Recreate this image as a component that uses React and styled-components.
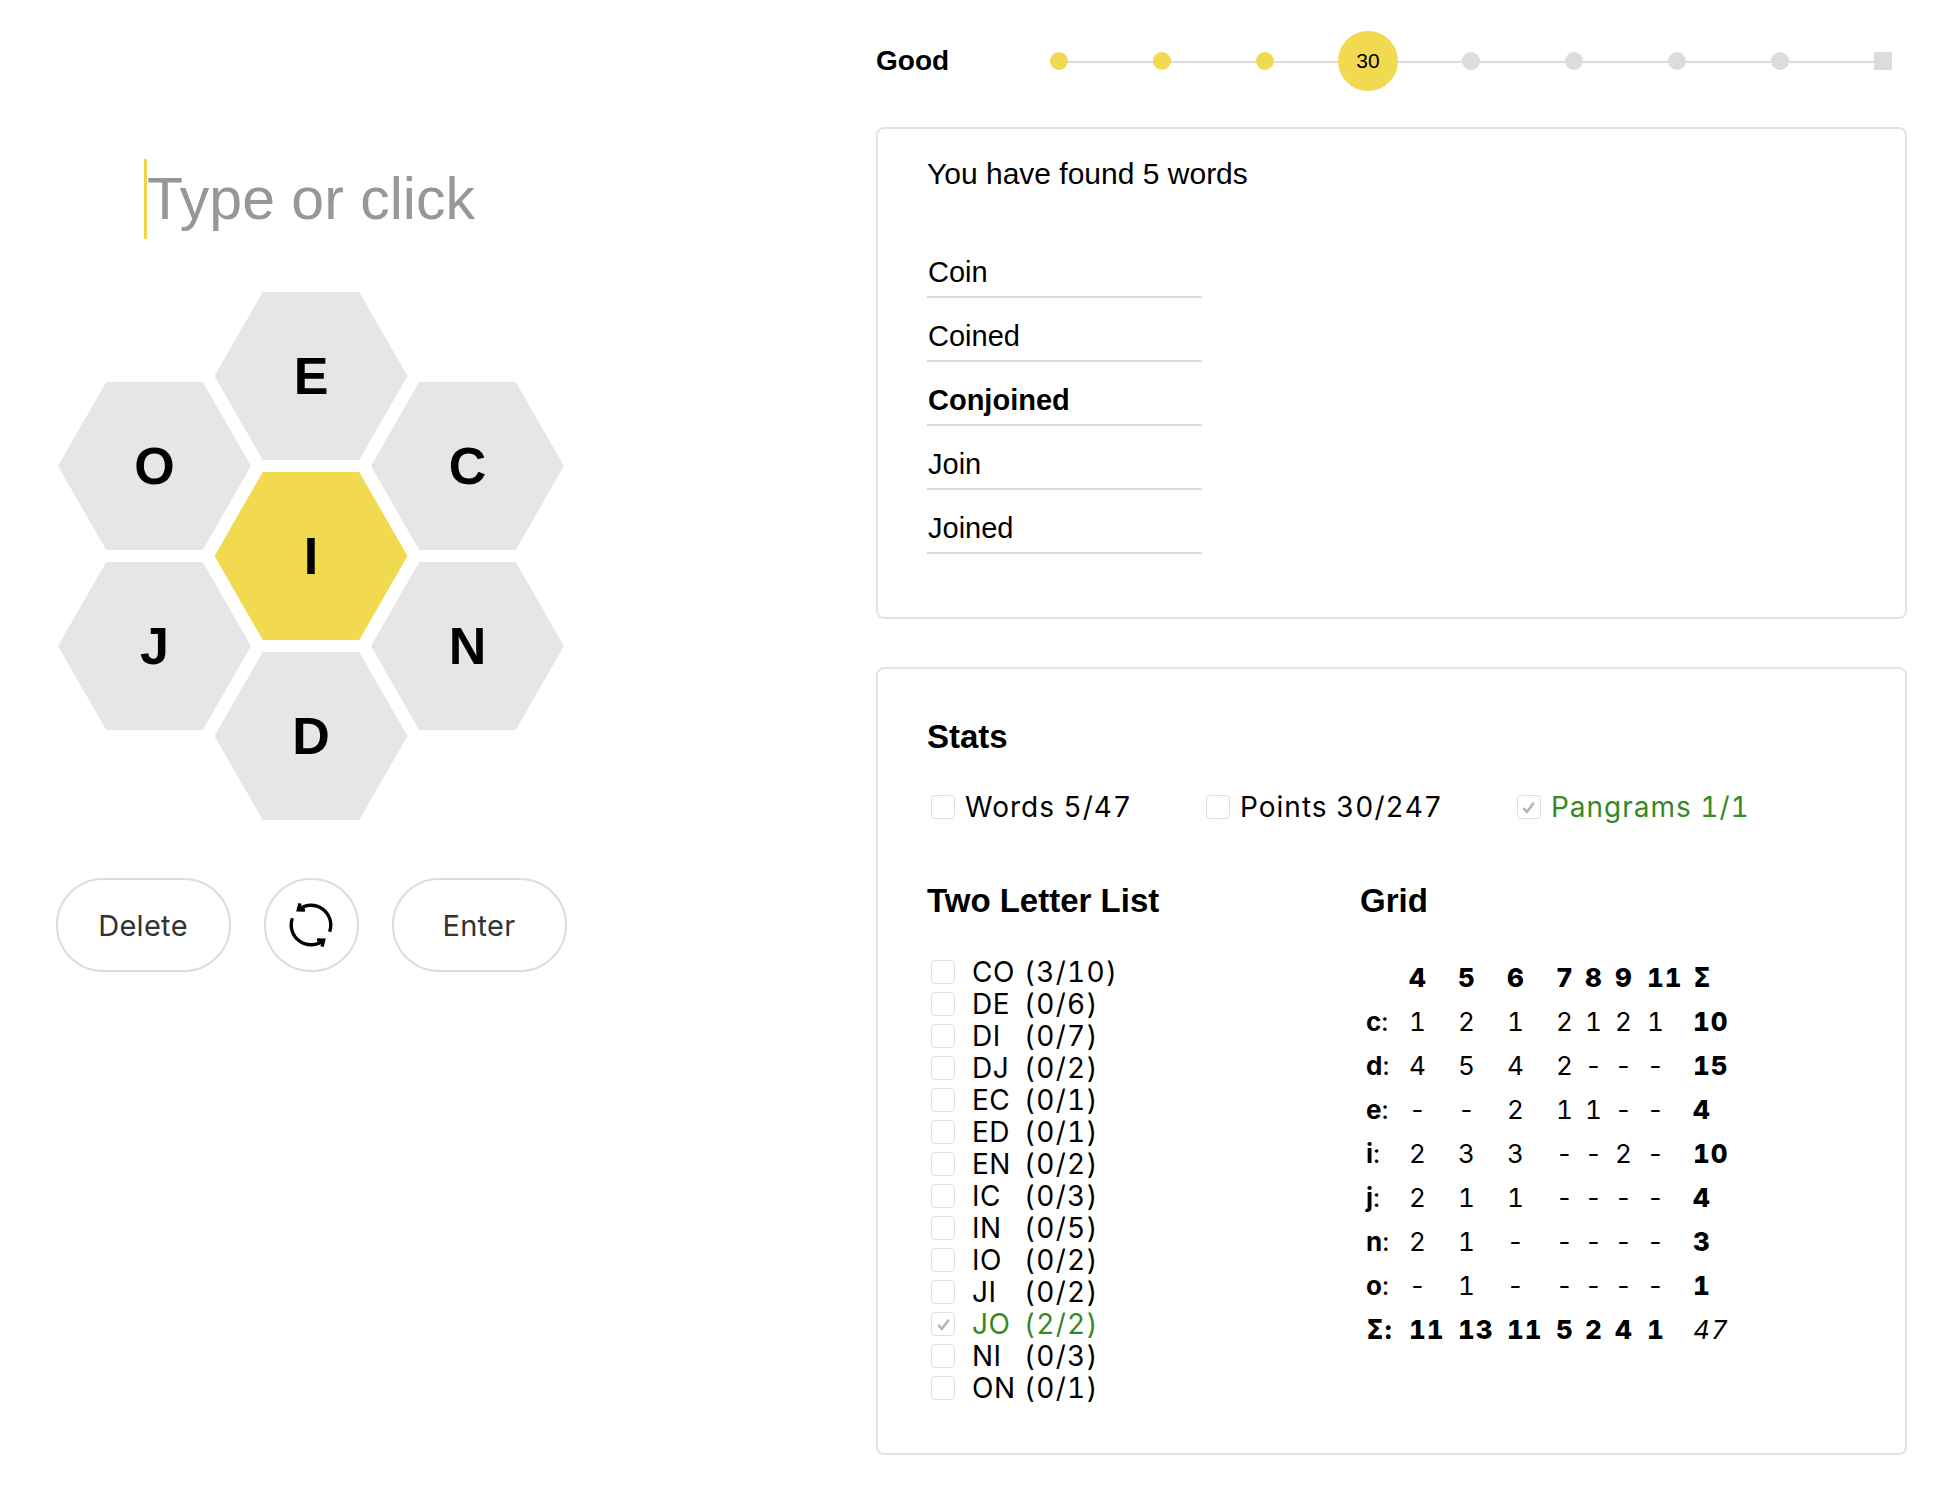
import React from 'react';
import styled, { createGlobalStyle } from 'styled-components';

const Global = createGlobalStyle`
  html, body { margin: 0; padding: 0; background: #ffffff; }
  body { font-family: "Liberation Sans", Arial, sans-serif; color: #000; }
  * { box-sizing: border-box; }
`;

const SYS = '"Inter", "Liberation Sans", Arial, sans-serif';
const GREEN = '#348a25';
const YELLOW = '#f1da50';

const Page = styled.div`
  display: flex;
  align-items: flex-start;
  width: 1946px;
  min-height: 1508px;
`;

/* ---------- left: game ---------- */
const GameColumn = styled.div`
  width: 622px;
  flex-shrink: 0;
  padding-top: 159px;
  display: flex;
  flex-direction: column;
  align-items: center;
`;

const InputRow = styled.div`
  display: flex;
  align-items: center;
  height: 80px;
  margin-left: -3px;
`;

const Caret = styled.span`
  width: 3px;
  height: 80px;
  background: #f0d54b;
`;

const Placeholder = styled.span`
  font-size: 59px;
  line-height: 80px;
  color: #979797;
`;

const Hive = styled.div`
  display: flex;
  margin-top: 53px;
  height: 528px;
`;

const HiveColumn = styled.div`
  display: flex;
  flex-direction: column;
  gap: 12px;
  margin-top: ${p => p.$offset}px;
  & + & {
    margin-left: -36.5px;
  }
`;

const Cell = styled.div`
  width: 193px;
  height: 168px;
  clip-path: polygon(25% 0, 75% 0, 100% 50%, 75% 100%, 25% 100%, 0 50%);
  background: ${p => (p.$center ? YELLOW : '#e6e6e6')};
  display: flex;
  align-items: center;
  justify-content: center;
  font-weight: 700;
  font-size: 52px;
  line-height: 1;
  text-transform: uppercase;
`;

const Controls = styled.div`
  display: flex;
  gap: 33px;
  margin-top: 58px;
`;

const PillButton = styled.button`
  width: ${p => (p.$round ? '95px' : '175px')};
  height: 94px;
  border-radius: 47px;
  border: 2px solid #dcdcdc;
  background: #fff;
  font-family: ${SYS};
  font-size: 29px;
  letter-spacing: 0.3px;
  color: #333;
  display: flex;
  align-items: center;
  justify-content: center;
  padding: 0;
`;

const ShuffleIcon = () => (
  <svg width="50" height="50" viewBox="0 0 48 48" fill="none" stroke="#000" strokeWidth="3.2" strokeLinecap="butt" strokeLinejoin="miter">
    <path d="M41.85 30.5 A19 19 0 0 0 11.79 9.45" />
    <path d="M6.15 17.5 A19 19 0 0 0 36.21 38.55" />
    <path d="M13.4 3.2 L11.79 9.45 L18.2 9.8" />
    <path d="M34.6 44.8 L36.21 38.55 L29.8 38.2" />
  </svg>
);

/* ---------- right: status ---------- */
const StatusColumn = styled.div`
  margin-left: 254px;
  width: 1031px;
  flex-shrink: 0;
  padding-top: 31px;
  display: flex;
  flex-direction: column;
`;

const ProgressRow = styled.div`
  display: flex;
  align-items: center;
  height: 60px;
`;

const RankLabel = styled.div`
  width: 131.5px;
  flex-shrink: 0;
  font-weight: 700;
  font-size: 28px;
  line-height: 32px;
`;

const Track = styled.div`
  position: relative;
  flex-shrink: 0;
  display: grid;
  grid-template-columns: repeat(9, 103px);
  align-items: center;
  height: 60px;
  &::before {
    content: '';
    position: absolute;
    left: 51.5px;
    right: 51.5px;
    top: 50%;
    height: 2px;
    background: #dcdcdc;
  }
`;

const Step = styled.div`
  justify-self: center;
  position: relative;
  z-index: 1;
  width: ${p => (p.$kind === 'current' ? 60 : 18)}px;
  height: ${p => (p.$kind === 'current' ? 60 : 18)}px;
  border-radius: ${p => (p.$kind === 'final' ? '0' : '50%')};
  background: ${p => (p.$kind === 'done' || p.$kind === 'current' ? YELLOW : '#dcdcdc')};
  display: flex;
  align-items: center;
  justify-content: center;
  font-size: 21px;
  color: #000;
`;

const Panel = styled.section`
  border: 2px solid #e3e3e3;
  border-radius: 8px;
  margin-top: ${p => p.$gap}px;
  padding: ${p => p.$pad};
`;

const FoundTitle = styled.div`
  font-size: 30px;
  line-height: 36px;
  margin-bottom: 42px;
`;

const WordList = styled.ul`
  list-style: none;
  margin: 0;
  padding: 0;
  width: 275px;
`;

const WordItem = styled.li`
  font-size: 29px;
  line-height: 36px;
  padding: 20px 0 6px 1px;
  border-bottom: 2px solid #dcdcdc;
  font-weight: ${p => (p.$pangram ? 700 : 400)};
`;

const Heading = styled.h2`
  margin: 0;
  font-size: 33px;
  line-height: 38px;
  font-weight: 700;
`;

const CheckRow = styled.div`
  display: flex;
  gap: 70px;
  margin-top: 33px;
  font-family: ${SYS};
  font-size: 28px;
  line-height: 36px;
  letter-spacing: 1px;
  font-variant-numeric: tabular-nums;
`;

const CheckItem = styled.div`
  display: flex;
  align-items: center;
  gap: 10px;
  color: ${p => (p.$done ? GREEN : '#000')};
`;

const Box = styled.span`
  width: 24px;
  height: 24px;
  margin-left: 4px;
  flex-shrink: 0;
  border: 1px solid #dedede;
  border-radius: 4px;
  background: #fff;
  display: flex;
  align-items: center;
  justify-content: center;
`;

const Tick = () => (
  <svg width="17" height="17" viewBox="0 0 16 16" fill="none" stroke="#b5b5b5" strokeWidth="2.4">
    <path d="M3 8.5 L6.5 12 L13 3.5" />
  </svg>
);

const CheckBox = ({ checked }) => <Box>{checked ? <Tick /> : null}</Box>;

const Columns = styled.div`
  display: grid;
  grid-template-columns: 433px auto;
  margin-top: 57px;
`;

const Section = styled.div`
  display: flex;
  flex-direction: column;
`;

const SectionBody = styled.div`
  margin-top: 36px;
`;

const PairRow = styled.div`
  display: flex;
  align-items: center;
  height: 32px;
  font-family: ${SYS};
  font-size: 28px;
  line-height: 32px;
  font-variant-numeric: tabular-nums;
  color: ${p => (p.$done ? GREEN : '#000')};
`;

const PairLabel = styled.span`
  width: 52px;
  margin-left: 17px;
  letter-spacing: 0.5px;
`;

const PairCount = styled.span`
  letter-spacing: 1.3px;
`;

const GridTable = styled.div`
  display: grid;
  grid-template-columns: 49px 49px 49px 49px 29px 30px 32px 46px auto;
  grid-auto-rows: 44px;
  font-family: ${SYS};
  font-size: 26px;
  line-height: 44px;
  font-variant-numeric: tabular-nums;
`;

const GridCell = styled.div`
  font-weight: ${p => (p.$bold ? 800 : 400)};
  font-style: ${p => (p.$italic ? 'italic' : 'normal')};
  padding-left: ${p => (p.$label ? '6px' : '0')};
  letter-spacing: ${p => (p.$bold || p.$italic ? '1px' : '0')};
  white-space: nowrap;
`;

const Sigma = styled.span`
  font-family: "DejaVu Sans", "Liberation Sans", sans-serif;
  font-weight: 700;
`;

const letters = { left: ['o', 'j'], mid: ['e', 'i', 'd'], right: ['c', 'n'] };
const steps = ['done', 'done', 'done', 'current', 'todo', 'todo', 'todo', 'todo', 'final'];
const words = [
  { w: 'Coin' },
  { w: 'Coined' },
  { w: 'Conjoined', p: true },
  { w: 'Join' },
  { w: 'Joined' },
];
const pairs = [
  ['CO', '(3/10)'], ['DE', '(0/6)'], ['DI', '(0/7)'], ['DJ', '(0/2)'], ['EC', '(0/1)'],
  ['ED', '(0/1)'], ['EN', '(0/2)'], ['IC', '(0/3)'], ['IN', '(0/5)'], ['IO', '(0/2)'],
  ['JI', '(0/2)'], ['JO', '(2/2)', true], ['NI', '(0/3)'], ['ON', '(0/1)'],
];
const gridRows = [
  ['c', ['1', '2', '1', '2', '1', '2', '1'], '10'],
  ['d', ['4', '5', '4', '2', '-', '-', '-'], '15'],
  ['e', ['-', '-', '2', '1', '1', '-', '-'], '4'],
  ['i', ['2', '3', '3', '-', '-', '2', '-'], '10'],
  ['j', ['2', '1', '1', '-', '-', '-', '-'], '4'],
  ['n', ['2', '1', '-', '-', '-', '-', '-'], '3'],
  ['o', ['-', '1', '-', '-', '-', '-', '-'], '1'],
];
const lengths = ['4', '5', '6', '7', '8', '9', '11'];
const totals = ['11', '13', '11', '5', '2', '4', '1'];

export default function App() {
  return (
    <>
      <Global />
      <Page>
        <GameColumn>
          <InputRow>
            <Caret />
            <Placeholder>Type or click</Placeholder>
          </InputRow>
          <Hive>
            <HiveColumn $offset={90}>
              {letters.left.map(l => <Cell key={l}>{l}</Cell>)}
            </HiveColumn>
            <HiveColumn $offset={0}>
              {letters.mid.map(l => <Cell key={l} $center={l === 'i'}>{l}</Cell>)}
            </HiveColumn>
            <HiveColumn $offset={90}>
              {letters.right.map(l => <Cell key={l}>{l}</Cell>)}
            </HiveColumn>
          </Hive>
          <Controls>
            <PillButton>Delete</PillButton>
            <PillButton $round aria-label="Shuffle"><ShuffleIcon /></PillButton>
            <PillButton>Enter</PillButton>
          </Controls>
        </GameColumn>

        <StatusColumn>
          <ProgressRow>
            <RankLabel>Good</RankLabel>
            <Track>
              {steps.map((k, i) => (
                <Step key={i} $kind={k}>{k === 'current' ? '30' : null}</Step>
              ))}
            </Track>
          </ProgressRow>

          <Panel $gap={36} $pad="27px 49px 63px">
            <FoundTitle>You have found 5 words</FoundTitle>
            <WordList>
              {words.map(x => <WordItem key={x.w} $pangram={x.p}>{x.w}</WordItem>)}
            </WordList>
          </Panel>

          <Panel $gap={48} $pad="49px 49px 49px">
            <Heading>Stats</Heading>
            <CheckRow>
              <CheckItem><CheckBox />Words 5/47</CheckItem>
              <CheckItem><CheckBox />Points 30/247</CheckItem>
              <CheckItem $done><CheckBox checked />Pangrams 1/1</CheckItem>
            </CheckRow>
            <Columns>
              <Section>
                <Heading>Two Letter List</Heading>
                <SectionBody>
                  {pairs.map(([p, c, done]) => (
                    <PairRow key={p} $done={done}>
                      <CheckBox checked={done} />
                      <PairLabel>{p}</PairLabel>
                      <PairCount>{c}</PairCount>
                    </PairRow>
                  ))}
                </SectionBody>
              </Section>
              <Section>
                <Heading>Grid</Heading>
                <SectionBody>
                  <GridTable>
                    <GridCell $label />
                    {lengths.map(n => <GridCell key={n} $bold>{n}</GridCell>)}
                    <GridCell $bold><Sigma>Σ</Sigma></GridCell>
                    {gridRows.map(([l, vals, sum]) => (
                      <React.Fragment key={l}>
                        <GridCell $label><b>{l}</b>:</GridCell>
                        {vals.map((v, i) => <GridCell key={i}>{v}</GridCell>)}
                        <GridCell $bold>{sum}</GridCell>
                      </React.Fragment>
                    ))}
                    <GridCell $label $bold><Sigma>Σ</Sigma>:</GridCell>
                    {totals.map((v, i) => <GridCell key={i} $bold>{v}</GridCell>)}
                    <GridCell $italic>47</GridCell>
                  </GridTable>
                </SectionBody>
              </Section>
            </Columns>
          </Panel>
        </StatusColumn>
      </Page>
    </>
  );
}
